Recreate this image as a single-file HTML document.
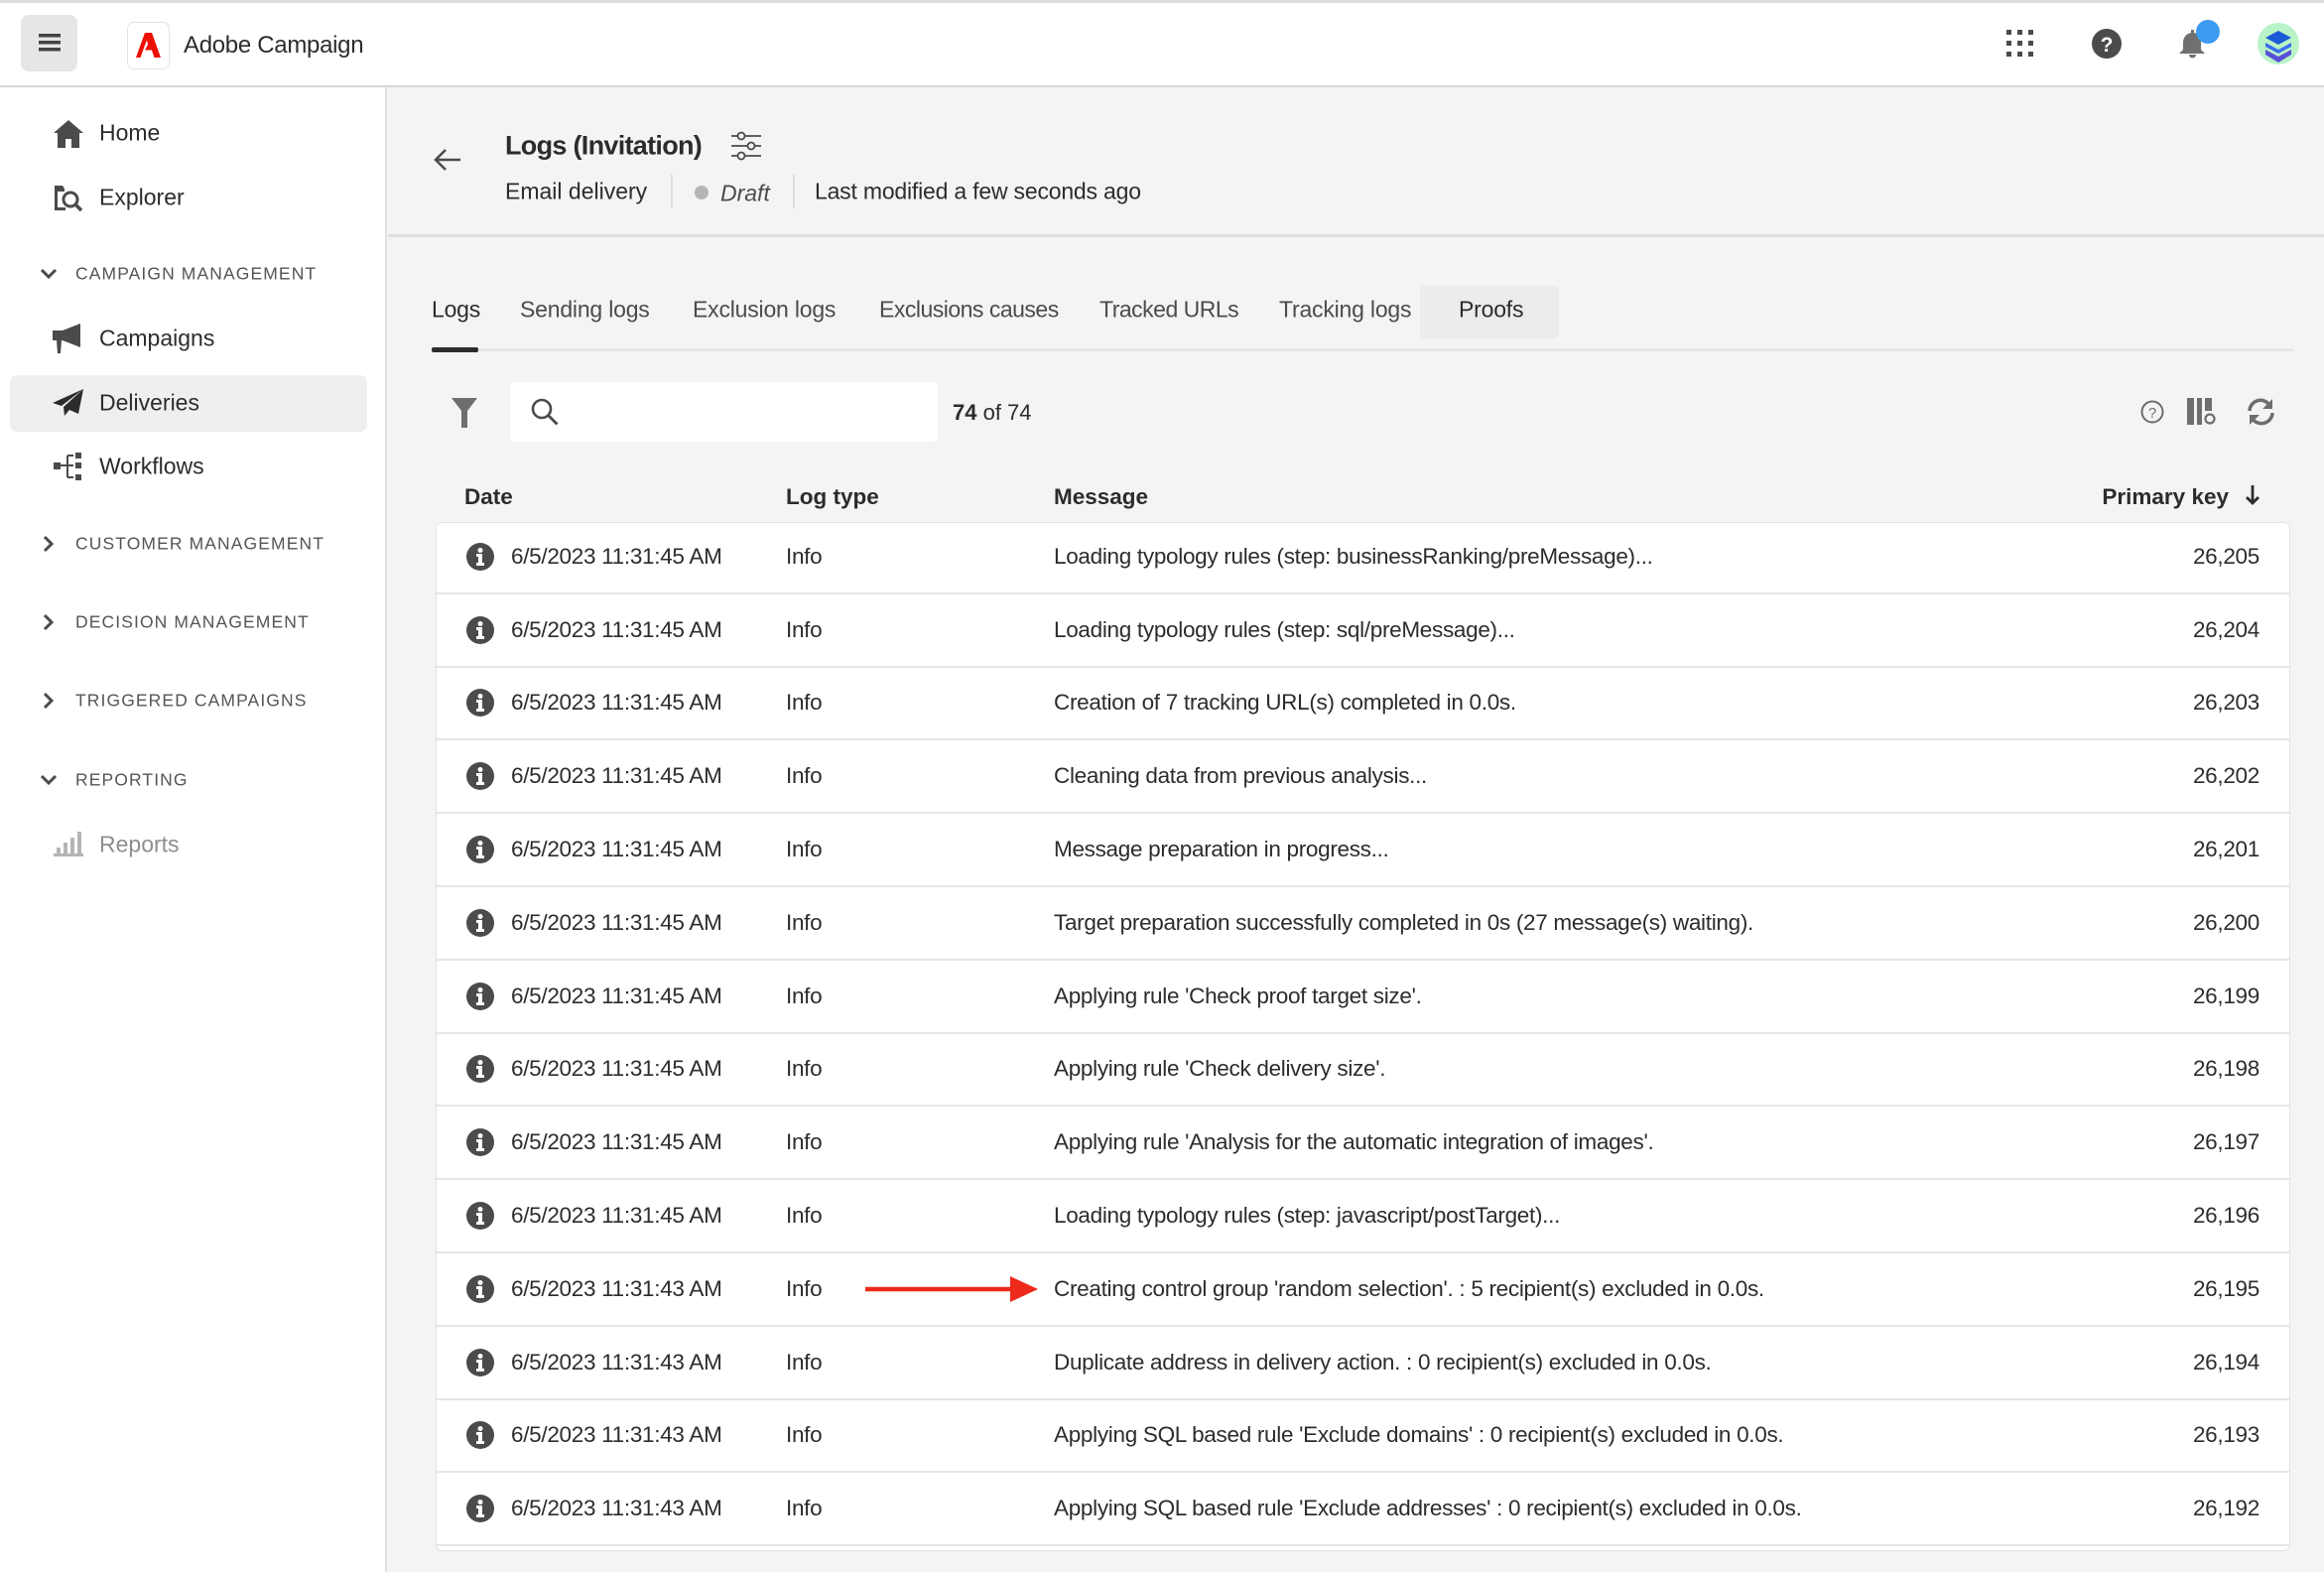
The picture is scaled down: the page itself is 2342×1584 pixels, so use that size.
<!DOCTYPE html>
<html><head><meta charset="utf-8">
<style>
*{box-sizing:border-box;margin:0;padding:0}
body{width:2342px;height:1584px;overflow:hidden;background:#f4f4f4;font-family:"Liberation Sans",sans-serif;color:#2c2c2c;position:relative}
.abs{position:absolute}
.top{left:0;top:0;width:2342px;height:88px;background:#fff;border-top:3px solid #ddd;border-bottom:2px solid #d8d8d8}
.side{left:0;top:88px;width:390px;height:1496px;background:#fff;border-right:2px solid #e1e1e1}
.nav{position:absolute;left:100px;font-size:23px;color:#2c2c2c;transform:translateY(-50%)}
.ic{position:absolute;transform:translate(-50%,-50%)}
.sec{position:absolute;left:76px;font-size:17.5px;letter-spacing:1.1px;color:#555;transform:translateY(-50%)}
.chev{position:absolute;left:49px;transform:translate(-50%,-50%)}
.t{position:absolute;transform:translateY(-50%);white-space:nowrap}
.tab{position:absolute;top:312px;transform:translateY(-50%);font-size:23px;color:#4b4b4b;letter-spacing:-0.2px}
.row{position:absolute;left:440px;width:1867px;height:73.8px;border-bottom:2px solid #e6e6e6;font-size:22.5px;color:#2c2c2c;letter-spacing:-0.3px}
.row span{position:absolute;top:50%;transform:translateY(-50%);white-space:nowrap}
.row svg{position:absolute;left:30px;top:50%;transform:translateY(-50%)}
</style></head><body>

<div class="abs top"></div>
<div class="abs" style="left:21px;top:15px;width:57px;height:57px;background:#e6e6e6;border-radius:8px"></div>
<svg class="abs" style="left:39px;top:34px" width="22" height="18"><rect y="0" width="22" height="3.5" fill="#444"/><rect y="7" width="22" height="3.5" fill="#444"/><rect y="14" width="22" height="3.5" fill="#444"/></svg>
<div class="abs" style="left:128px;top:22px;width:43px;height:48px;border:1.5px solid #e3e3e3;border-radius:7px;background:#fff"></div>
<svg class="abs" style="left:137px;top:33px" width="25" height="25" viewBox="0 0 25 25"><path d="M9 0h7l9 25h-6.5l-2.6-7.5h-6.8l3-6 2 6-3.2-10L4.5 25H0z" fill="#eb1000"/></svg>
<div class="t" style="left:185px;top:46px;font-size:24px;color:#2c2c2c;letter-spacing:-0.3px">Adobe Campaign</div>

<svg class="abs" style="left:2022px;top:30px" width="28" height="28"><g fill="#4b4b4b"><rect x="0" y="0" width="5" height="5"/><rect x="11" y="0" width="5" height="5"/><rect x="22" y="0" width="5" height="5"/><rect x="0" y="11" width="5" height="5"/><rect x="11" y="11" width="5" height="5"/><rect x="22" y="11" width="5" height="5"/><rect x="0" y="22" width="5" height="5"/><rect x="11" y="22" width="5" height="5"/><rect x="22" y="22" width="5" height="5"/></g></svg>
<svg class="abs" style="left:2108px;top:29px" width="30" height="30"><circle cx="15" cy="15" r="15" fill="#4b4b4b"/><text x="15" y="23" text-anchor="middle" font-family="Liberation Sans" font-weight="bold" font-size="21" fill="#fff">?</text></svg>
<svg class="abs" style="left:2194px;top:28px" width="32" height="32"><path d="M14 2h3v3c5 1 7 5 7 10v7l4 4H2l4-4v-7c0-5 3-9 8-10z" fill="#707070"/><path d="M12 27h7a3.5 3.5 0 0 1-7 0z" fill="#707070"/></svg>
<div class="abs" style="left:2213px;top:20px;width:24px;height:24px;border-radius:50%;background:#3d9bf0"></div>
<div class="abs" style="left:2275px;top:23px;width:42px;height:42px;border-radius:50%;background:#b9f3c7;overflow:hidden">
<svg width="42" height="42"><path d="M21 8l13 7-13 7-13-7z" fill="#1c5ad6"/><path d="M8 20l13 7 13-7v4l-13 7-13-7z" fill="#3a6ef0"/><path d="M8 27l13 7 13-7v5l-13 8-13-8z" fill="#5a4fd8"/></svg></div>

<div class="abs side"></div>
<div class="abs" style="left:10px;top:378px;width:360px;height:57px;background:#efefef;border-radius:7px"></div>
<svg class="ic" style="left:69px;top:135px" width="30" height="28"><path d="M15 0l15 13h-4v15h-8v-9h-6v9H4V13H0z" fill="#4b4b4b"/></svg>
<div class="nav" style="top:134px">Home</div>
<svg class="ic" style="left:69px;top:199px" width="30" height="30"><path d="M1 3h8l2 3h0v3H4v16h8v3H1z" fill="#4b4b4b"/><circle cx="17" cy="17" r="7" fill="none" stroke="#4b4b4b" stroke-width="3"/><path d="M22 22l6 6" stroke="#4b4b4b" stroke-width="3.5"/></svg>
<div class="nav" style="top:199px">Explorer</div>
<svg class="chev" style="top:276px" width="18" height="12"><path d="M2 2l7 7 7-7" fill="none" stroke="#4b4b4b" stroke-width="3"/></svg>
<div class="sec" style="top:276px">CAMPAIGN MANAGEMENT</div>
<svg class="ic" style="left:69px;top:341px" width="32" height="30"><path d="M0 7h10l18-7v24L10 17H0z" fill="#4b4b4b"/><path d="M4 17h5l-1 13H5z" fill="#4b4b4b"/></svg>
<div class="nav" style="top:341px">Campaigns</div>
<svg class="ic" style="left:69px;top:406px" width="32" height="28"><path d="M31 0L0 14l9 3zM31 0L11 18l1 9 5-6 9 4z" fill="#2c2c2c"/></svg>
<div class="nav" style="top:406px">Deliveries</div>
<svg class="ic" style="left:69px;top:470px" width="30" height="28"><rect x="0" y="10" width="7" height="7" fill="#4b4b4b"/><path d="M7 13h7M14 3v22M14 3h6M14 13h6M14 25h6" stroke="#4b4b4b" stroke-width="2" fill="none"/><rect x="22" y="0" width="6" height="6" fill="#4b4b4b"/><rect x="22" y="10" width="6" height="6" fill="#4b4b4b"/><rect x="22" y="22" width="6" height="6" fill="#4b4b4b"/></svg>
<div class="nav" style="top:470px">Workflows</div>
<svg class="chev" style="top:548px" width="12" height="18"><path d="M2 2l7 7-7 7" fill="none" stroke="#4b4b4b" stroke-width="3"/></svg>
<div class="sec" style="top:548px">CUSTOMER MANAGEMENT</div>
<svg class="chev" style="top:627px" width="12" height="18"><path d="M2 2l7 7-7 7" fill="none" stroke="#4b4b4b" stroke-width="3"/></svg>
<div class="sec" style="top:627px">DECISION MANAGEMENT</div>
<svg class="chev" style="top:706px" width="12" height="18"><path d="M2 2l7 7-7 7" fill="none" stroke="#4b4b4b" stroke-width="3"/></svg>
<div class="sec" style="top:706px">TRIGGERED CAMPAIGNS</div>
<svg class="chev" style="top:786px" width="18" height="12"><path d="M2 2l7 7 7-7" fill="none" stroke="#4b4b4b" stroke-width="3"/></svg>
<div class="sec" style="top:786px">REPORTING</div>
<svg class="ic" style="left:69px;top:851px" width="30" height="26"><g fill="#b5b5b5"><rect x="0" y="22" width="30" height="3"/><rect x="3" y="16" width="4" height="6"/><rect x="10" y="11" width="4" height="11"/><rect x="17" y="6" width="4" height="16"/><rect x="24" y="0" width="4" height="22"/></g></svg>
<div class="nav" style="top:851px;color:#8e8e8e">Reports</div>

<!-- header -->
<div class="abs" style="left:391px;top:236px;width:1951px;height:3px;background:#dedede"></div>
<svg class="abs" style="left:436px;top:149px" width="30" height="24"><path d="M28 12H3M13 2L3 12l10 10" fill="none" stroke="#4b4b4b" stroke-width="2.5"/></svg>
<div class="t" style="left:509px;top:147px;font-size:27px;font-weight:bold;color:#2c2c2c;letter-spacing:-0.7px">Logs (Invitation)</div>
<svg class="abs" style="left:737px;top:132px" width="30" height="30"><g stroke="#4b4b4b" stroke-width="1.8" fill="#f4f4f4"><path d="M0 5h30M0 15h30M0 25h30"/><circle cx="10" cy="5" r="3.5"/><circle cx="20" cy="15" r="3.5"/><circle cx="10" cy="25" r="3.5"/></g></svg>
<div class="t" style="left:509px;top:193px;font-size:23px">Email delivery</div>
<div class="abs" style="left:676px;top:176px;width:2px;height:34px;background:#ddd"></div>
<div class="abs" style="left:700px;top:187px;width:14px;height:14px;border-radius:50%;background:#b5b5b5"></div>
<div class="t" style="left:726px;top:195px;font-size:23px;font-style:italic;color:#4b4b4b">Draft</div>
<div class="abs" style="left:799px;top:176px;width:2px;height:34px;background:#ddd"></div>
<div class="t" style="left:821px;top:193px;font-size:23px;letter-spacing:-0.2px">Last modified a few seconds ago</div>

<!-- tabs -->
<div class="abs" style="left:1431px;top:288px;width:140px;height:53px;background:#ececec;border-radius:4px"></div>
<div class="abs" style="left:435px;top:351px;width:1876px;height:3px;background:#e6e6e6"></div>
<div class="abs" style="left:435px;top:350px;width:47px;height:5px;background:#2c2c2c;border-radius:2px"></div>
<div class="tab" style="left:435px;color:#2c2c2c">Logs</div>
<div class="tab" style="left:524px">Sending logs</div>
<div class="tab" style="left:698px">Exclusion logs</div>
<div class="tab" style="left:886px;letter-spacing:-0.5px">Exclusions causes</div>
<div class="tab" style="left:1108px;letter-spacing:-0.5px">Tracked URLs</div>
<div class="tab" style="left:1289px">Tracking logs</div>
<div class="tab" style="left:1470px;color:#2c2c2c">Proofs</div>

<!-- toolbar -->
<svg class="abs" style="left:455px;top:401px" width="26" height="30"><path d="M0 0h26L16 13v17h-6V13z" fill="#6e6e6e"/></svg>
<div class="abs" style="left:514px;top:385px;width:431px;height:60px;background:#fff;border-radius:5px"></div>
<svg class="abs" style="left:534px;top:400px" width="30" height="30"><circle cx="12" cy="12" r="9" fill="none" stroke="#4b4b4b" stroke-width="2.6"/><path d="M18.5 18.5l9 9" stroke="#4b4b4b" stroke-width="2.8"/></svg>
<div class="t" style="left:960px;top:416px;font-size:22px"><b>74</b> of 74</div>
<svg class="abs" style="left:2157px;top:403px" width="24" height="24"><circle cx="12" cy="12" r="10.5" fill="none" stroke="#6e6e6e" stroke-width="2"/><text x="12" y="18" text-anchor="middle" font-family="Liberation Sans" font-size="15" fill="#6e6e6e">?</text></svg>
<svg class="abs" style="left:2204px;top:401px" width="30" height="28"><g fill="#6e6e6e"><rect x="0" y="0" width="7" height="27"/><rect x="10" y="0" width="5" height="27"/><rect x="18" y="0" width="7" height="13"/></g><circle cx="23" cy="21" r="4.5" fill="none" stroke="#6e6e6e" stroke-width="2.2"/></svg>
<svg class="abs" style="left:2263px;top:401px" width="31" height="28"><path d="M4 13A11 11 0 0 1 24 7" fill="none" stroke="#6e6e6e" stroke-width="3.5"/><path d="M27 1v10H17z" fill="#6e6e6e"/><path d="M27 15A11 11 0 0 1 7 21" fill="none" stroke="#6e6e6e" stroke-width="3.5"/><path d="M4 27V17h10z" fill="#6e6e6e"/></svg>

<!-- table header -->
<div class="t" style="left:468px;top:501px;font-size:22.5px;font-weight:bold;color:#2c2c2c">Date</div>
<div class="t" style="left:792px;top:501px;font-size:22.5px;font-weight:bold;color:#2c2c2c">Log type</div>
<div class="t" style="left:1062px;top:501px;font-size:22.5px;font-weight:bold;color:#2c2c2c">Message</div>
<div class="t" style="right:96px;top:501px;font-size:22.5px;font-weight:bold;color:#2c2c2c">Primary key</div>
<svg class="abs" style="left:2262px;top:488px" width="16" height="22"><path d="M8 1v18M2 13l6 6 6-6" fill="none" stroke="#2c2c2c" stroke-width="2.8"/></svg>

<div class="abs" style="left:439px;top:526px;width:1869px;height:1037px;background:#fff;border:1.5px solid #e3e3e3;border-radius:6px"></div>

<div class="row" style="top:525px"><svg width="28" height="28"><circle cx="14" cy="14" r="14" fill="#4b4b4b"/><circle cx="14" cy="7.5" r="2.5" fill="#fff"/><path d="M10 11h6v9h2v3h-8v-3h2v-6h-2z" fill="#fff"/></svg><span style="left:75px">6/5/2023 11:31:45 AM</span><span style="left:352px">Info</span><span style="left:622px">Loading typology rules (step: businessRanking/preMessage)...</span><span style="right:30px">26,205</span></div>
<div class="row" style="top:598.8px"><svg width="28" height="28"><circle cx="14" cy="14" r="14" fill="#4b4b4b"/><circle cx="14" cy="7.5" r="2.5" fill="#fff"/><path d="M10 11h6v9h2v3h-8v-3h2v-6h-2z" fill="#fff"/></svg><span style="left:75px">6/5/2023 11:31:45 AM</span><span style="left:352px">Info</span><span style="left:622px">Loading typology rules (step: sql/preMessage)...</span><span style="right:30px">26,204</span></div>
<div class="row" style="top:672.6px"><svg width="28" height="28"><circle cx="14" cy="14" r="14" fill="#4b4b4b"/><circle cx="14" cy="7.5" r="2.5" fill="#fff"/><path d="M10 11h6v9h2v3h-8v-3h2v-6h-2z" fill="#fff"/></svg><span style="left:75px">6/5/2023 11:31:45 AM</span><span style="left:352px">Info</span><span style="left:622px">Creation of 7 tracking URL(s) completed in 0.0s.</span><span style="right:30px">26,203</span></div>
<div class="row" style="top:746.4px"><svg width="28" height="28"><circle cx="14" cy="14" r="14" fill="#4b4b4b"/><circle cx="14" cy="7.5" r="2.5" fill="#fff"/><path d="M10 11h6v9h2v3h-8v-3h2v-6h-2z" fill="#fff"/></svg><span style="left:75px">6/5/2023 11:31:45 AM</span><span style="left:352px">Info</span><span style="left:622px">Cleaning data from previous analysis...</span><span style="right:30px">26,202</span></div>
<div class="row" style="top:820.2px"><svg width="28" height="28"><circle cx="14" cy="14" r="14" fill="#4b4b4b"/><circle cx="14" cy="7.5" r="2.5" fill="#fff"/><path d="M10 11h6v9h2v3h-8v-3h2v-6h-2z" fill="#fff"/></svg><span style="left:75px">6/5/2023 11:31:45 AM</span><span style="left:352px">Info</span><span style="left:622px">Message preparation in progress...</span><span style="right:30px">26,201</span></div>
<div class="row" style="top:894px"><svg width="28" height="28"><circle cx="14" cy="14" r="14" fill="#4b4b4b"/><circle cx="14" cy="7.5" r="2.5" fill="#fff"/><path d="M10 11h6v9h2v3h-8v-3h2v-6h-2z" fill="#fff"/></svg><span style="left:75px">6/5/2023 11:31:45 AM</span><span style="left:352px">Info</span><span style="left:622px">Target preparation successfully completed in 0s (27 message(s) waiting).</span><span style="right:30px">26,200</span></div>
<div class="row" style="top:967.8px"><svg width="28" height="28"><circle cx="14" cy="14" r="14" fill="#4b4b4b"/><circle cx="14" cy="7.5" r="2.5" fill="#fff"/><path d="M10 11h6v9h2v3h-8v-3h2v-6h-2z" fill="#fff"/></svg><span style="left:75px">6/5/2023 11:31:45 AM</span><span style="left:352px">Info</span><span style="left:622px">Applying rule 'Check proof target size'.</span><span style="right:30px">26,199</span></div>
<div class="row" style="top:1041.6px"><svg width="28" height="28"><circle cx="14" cy="14" r="14" fill="#4b4b4b"/><circle cx="14" cy="7.5" r="2.5" fill="#fff"/><path d="M10 11h6v9h2v3h-8v-3h2v-6h-2z" fill="#fff"/></svg><span style="left:75px">6/5/2023 11:31:45 AM</span><span style="left:352px">Info</span><span style="left:622px">Applying rule 'Check delivery size'.</span><span style="right:30px">26,198</span></div>
<div class="row" style="top:1115.4px"><svg width="28" height="28"><circle cx="14" cy="14" r="14" fill="#4b4b4b"/><circle cx="14" cy="7.5" r="2.5" fill="#fff"/><path d="M10 11h6v9h2v3h-8v-3h2v-6h-2z" fill="#fff"/></svg><span style="left:75px">6/5/2023 11:31:45 AM</span><span style="left:352px">Info</span><span style="left:622px">Applying rule 'Analysis for the automatic integration of images'.</span><span style="right:30px">26,197</span></div>
<div class="row" style="top:1189.2px"><svg width="28" height="28"><circle cx="14" cy="14" r="14" fill="#4b4b4b"/><circle cx="14" cy="7.5" r="2.5" fill="#fff"/><path d="M10 11h6v9h2v3h-8v-3h2v-6h-2z" fill="#fff"/></svg><span style="left:75px">6/5/2023 11:31:45 AM</span><span style="left:352px">Info</span><span style="left:622px">Loading typology rules (step: javascript/postTarget)...</span><span style="right:30px">26,196</span></div>
<div class="row" style="top:1263px"><svg width="28" height="28"><circle cx="14" cy="14" r="14" fill="#4b4b4b"/><circle cx="14" cy="7.5" r="2.5" fill="#fff"/><path d="M10 11h6v9h2v3h-8v-3h2v-6h-2z" fill="#fff"/></svg><span style="left:75px">6/5/2023 11:31:43 AM</span><span style="left:352px">Info</span><span style="left:622px">Creating control group 'random selection'. : 5 recipient(s) excluded in 0.0s.</span><span style="right:30px">26,195</span></div>
<div class="row" style="top:1336.8px"><svg width="28" height="28"><circle cx="14" cy="14" r="14" fill="#4b4b4b"/><circle cx="14" cy="7.5" r="2.5" fill="#fff"/><path d="M10 11h6v9h2v3h-8v-3h2v-6h-2z" fill="#fff"/></svg><span style="left:75px">6/5/2023 11:31:43 AM</span><span style="left:352px">Info</span><span style="left:622px">Duplicate address in delivery action. : 0 recipient(s) excluded in 0.0s.</span><span style="right:30px">26,194</span></div>
<div class="row" style="top:1410.6px"><svg width="28" height="28"><circle cx="14" cy="14" r="14" fill="#4b4b4b"/><circle cx="14" cy="7.5" r="2.5" fill="#fff"/><path d="M10 11h6v9h2v3h-8v-3h2v-6h-2z" fill="#fff"/></svg><span style="left:75px">6/5/2023 11:31:43 AM</span><span style="left:352px">Info</span><span style="left:622px">Applying SQL based rule 'Exclude domains' : 0 recipient(s) excluded in 0.0s.</span><span style="right:30px">26,193</span></div>
<div class="row" style="top:1484.4px"><svg width="28" height="28"><circle cx="14" cy="14" r="14" fill="#4b4b4b"/><circle cx="14" cy="7.5" r="2.5" fill="#fff"/><path d="M10 11h6v9h2v3h-8v-3h2v-6h-2z" fill="#fff"/></svg><span style="left:75px">6/5/2023 11:31:43 AM</span><span style="left:352px">Info</span><span style="left:622px">Applying SQL based rule 'Exclude addresses' : 0 recipient(s) excluded in 0.0s.</span><span style="right:30px">26,192</span></div>

<svg class="abs" style="left:872px;top:1285px" width="176" height="28"><path d="M0 14h150" stroke="#ee2a1b" stroke-width="4.5"/><path d="M146 1l28 13-28 13z" fill="#ee2a1b"/></svg>
</body></html>
